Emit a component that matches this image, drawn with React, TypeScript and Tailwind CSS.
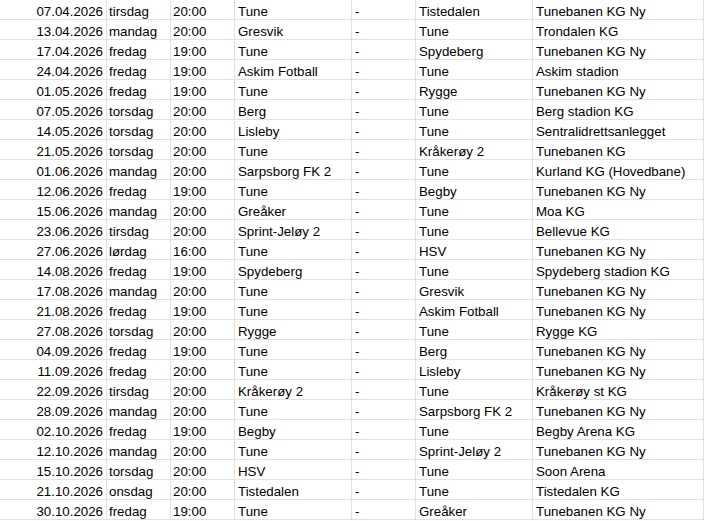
import React from "react";

const rows: string[][] = [
  ["07.04.2026", "tirsdag", "20:00", "Tune", "Tistedalen", "Tunebanen KG Ny"],
  ["13.04.2026", "mandag", "20:00", "Gresvik", "Tune", "Trondalen KG"],
  ["17.04.2026", "fredag", "19:00", "Tune", "Spydeberg", "Tunebanen KG Ny"],
  ["24.04.2026", "fredag", "19:00", "Askim Fotball", "Tune", "Askim stadion"],
  ["01.05.2026", "fredag", "19:00", "Tune", "Rygge", "Tunebanen KG Ny"],
  ["07.05.2026", "torsdag", "20:00", "Berg", "Tune", "Berg stadion KG"],
  ["14.05.2026", "torsdag", "20:00", "Lisleby", "Tune", "Sentralidrettsanlegget"],
  ["21.05.2026", "torsdag", "20:00", "Tune", "Kråkerøy 2", "Tunebanen KG"],
  ["01.06.2026", "mandag", "20:00", "Sarpsborg FK 2", "Tune", "Kurland KG (Hovedbane)"],
  ["12.06.2026", "fredag", "19:00", "Tune", "Begby", "Tunebanen KG Ny"],
  ["15.06.2026", "mandag", "20:00", "Greåker", "Tune", "Moa KG"],
  ["23.06.2026", "tirsdag", "20:00", "Sprint-Jeløy 2", "Tune", "Bellevue KG"],
  ["27.06.2026", "lørdag", "16:00", "Tune", "HSV", "Tunebanen KG Ny"],
  ["14.08.2026", "fredag", "19:00", "Spydeberg", "Tune", "Spydeberg stadion KG"],
  ["17.08.2026", "mandag", "20:00", "Tune", "Gresvik", "Tunebanen KG Ny"],
  ["21.08.2026", "fredag", "19:00", "Tune", "Askim Fotball", "Tunebanen KG Ny"],
  ["27.08.2026", "torsdag", "20:00", "Rygge", "Tune", "Rygge KG"],
  ["04.09.2026", "fredag", "19:00", "Tune", "Berg", "Tunebanen KG Ny"],
  ["11.09.2026", "fredag", "20:00", "Tune", "Lisleby", "Tunebanen KG Ny"],
  ["22.09.2026", "tirsdag", "20:00", "Kråkerøy 2", "Tune", "Kråkerøy st KG"],
  ["28.09.2026", "mandag", "20:00", "Tune", "Sarpsborg FK 2", "Tunebanen KG Ny"],
  ["02.10.2026", "fredag", "19:00", "Begby", "Tune", "Begby Arena KG"],
  ["12.10.2026", "mandag", "20:00", "Tune", "Sprint-Jeløy 2", "Tunebanen KG Ny"],
  ["15.10.2026", "torsdag", "20:00", "HSV", "Tune", "Soon Arena"],
  ["21.10.2026", "onsdag", "20:00", "Tistedalen", "Tune", "Tistedalen KG"],
  ["30.10.2026", "fredag", "19:00", "Tune", "Greåker", "Tunebanen KG Ny"],
];

const cell =
  "h-[20px] border-b border-r border-[#e1e1e1] flex items-end overflow-hidden whitespace-nowrap leading-[15px]";

export default function App() {
  return (
    <div
      className="w-[704px] h-[521px] bg-white text-black text-[13.3px]"
      style={{ fontFamily: '"Liberation Sans", Arial, sans-serif' }}
    >
      <div className="grid grid-cols-[107px_64px_64px_117px_64px_117px_171px]">
        {rows.map((r, i) => (
          <React.Fragment key={i}>
            <div className={`${cell} justify-end pr-[3px]`}>{r[0]}</div>
            <div className={`${cell} pl-[2px]`}>{r[1]}</div>
            <div className={`${cell} pl-[2px]`}>{r[2]}</div>
            <div className={`${cell} pl-[3px]`}>{r[3]}</div>
            <div className={`${cell} pl-[3px]`}>-</div>
            <div className={`${cell} pl-[3px]`}>{r[4]}</div>
            <div className={`${cell} pl-[3px]`}>{r[5]}</div>
          </React.Fragment>
        ))}
      </div>
    </div>
  );
}
